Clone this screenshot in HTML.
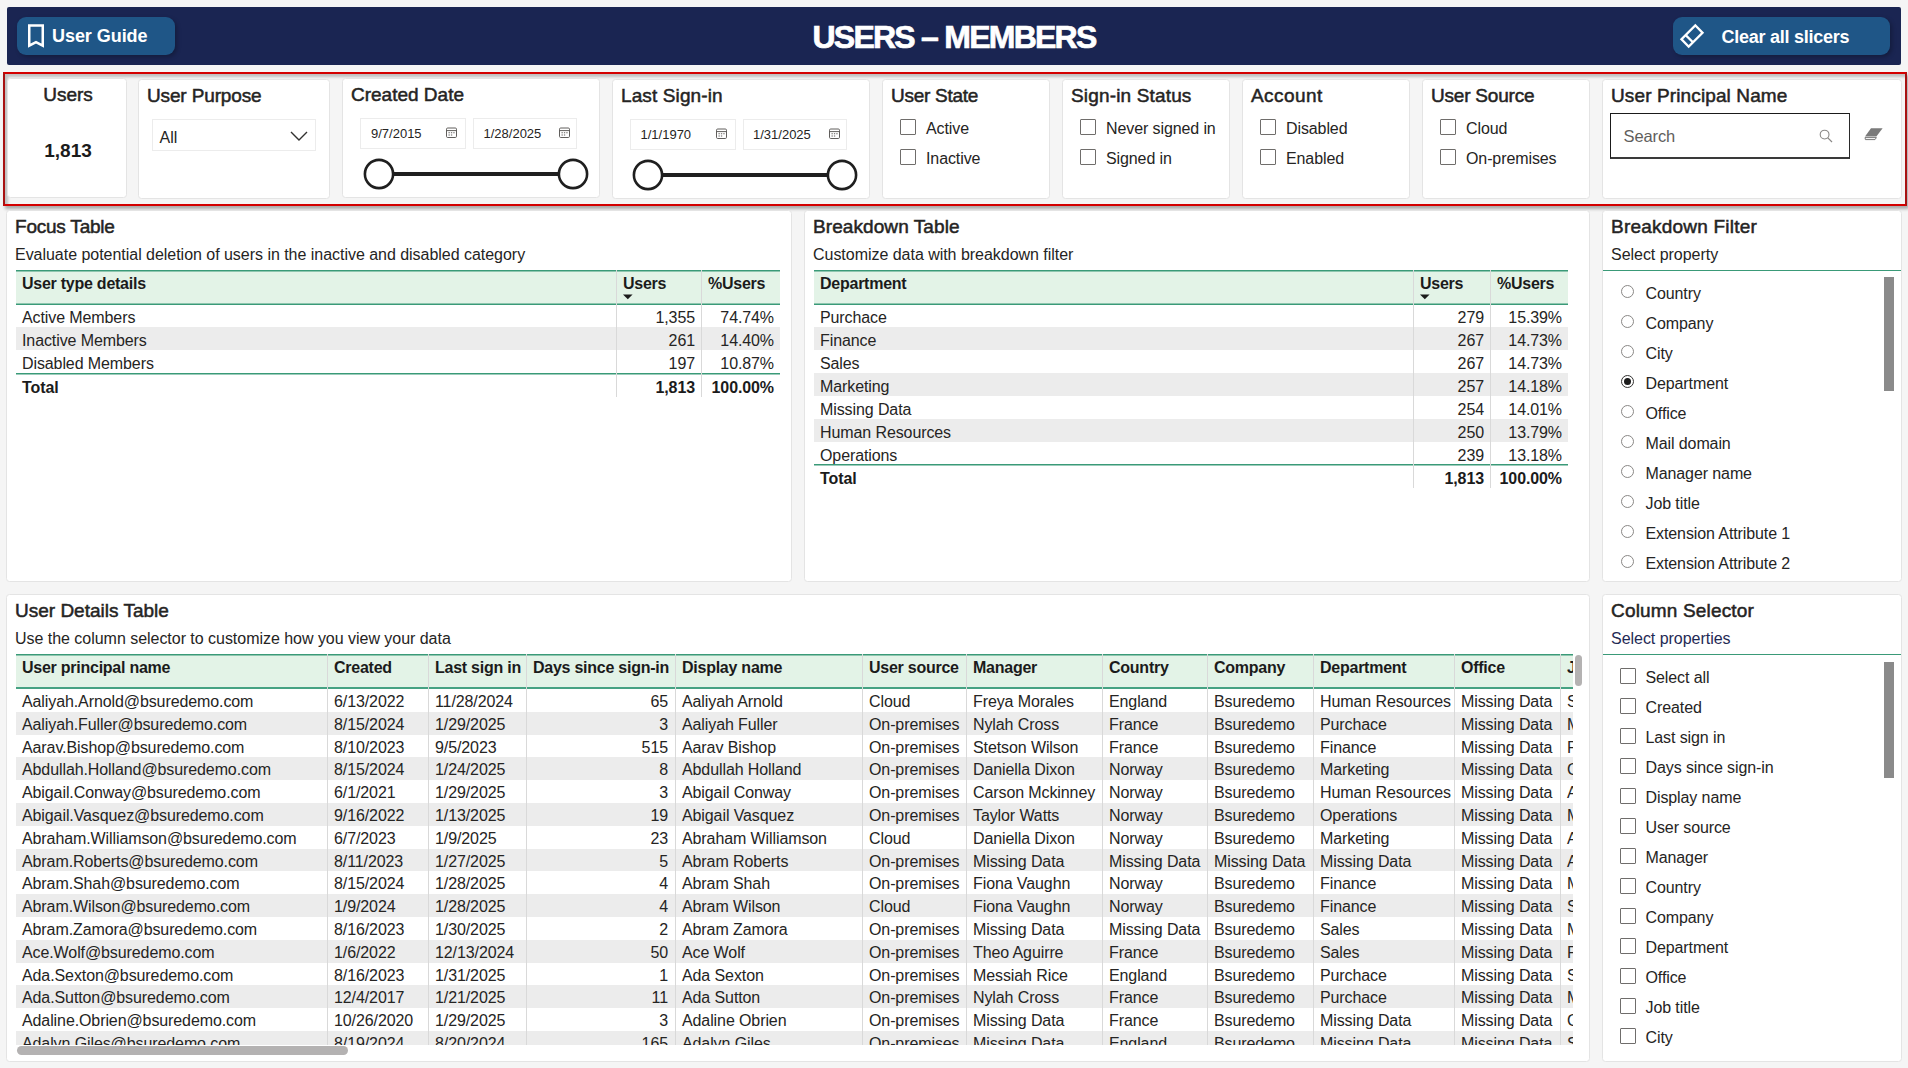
<!DOCTYPE html>
<html lang="en"><head><meta charset="utf-8"><title>Users - Members</title>
<style>
*{box-sizing:border-box;margin:0;padding:0}
html,body{width:1908px;height:1068px;overflow:hidden;background:#f5f5f5}
body{font-family:"Liberation Sans",sans-serif;color:#252423;position:relative}
.abs{position:absolute}
.card{position:absolute;background:#fff;border:1px solid #e4e4e4;border-radius:3.5px}
.hdr{position:absolute;left:7px;top:7px;width:1894px;height:58px;background:#1a2552;border-radius:2px}
.btn{position:absolute;top:10px;height:38px;background:#1f5687;border-radius:9px;color:#fff;font-weight:bold;box-shadow:2px 2px 4px rgba(0,0,0,.25)}
.title{position:absolute;left:0;top:0;width:100%;height:58px;line-height:60px;text-align:center;color:#fff;font-weight:bold;font-size:32px;letter-spacing:-1.75px;-webkit-text-stroke:0.7px #fff}
.redbox{position:absolute;left:3px;top:72px;width:1904px;height:134px;border:2px solid #d40000;border-left-color:#a81212;border-right-color:#a81212;box-shadow:2px 3px 3px rgba(0,0,0,.30), inset 3px 3px 3px rgba(0,0,0,.22)}
.st{position:absolute;font-size:19px;line-height:22px;color:#252423;white-space:nowrap;letter-spacing:0;-webkit-text-stroke:0.5px #252423}
.cb{position:absolute;width:16px;height:16px;border:1px solid #6f6d6b;background:#fff;border-radius:1px}
.cl{position:absolute;font-size:16px;letter-spacing:-0.1px;line-height:18px;white-space:nowrap;color:#252423}
.dinp{position:absolute;height:31px;border:1px solid #ececec;background:#fff;font-size:13px;line-height:29px;padding-left:10px;color:#252423}

.ct{position:absolute;font-size:19px;line-height:22px;white-space:nowrap;letter-spacing:0;-webkit-text-stroke:0.5px #252423}
.cs{position:absolute;font-size:16px;letter-spacing:-0.03px;line-height:18px;white-space:nowrap;color:#252423}
.tb{position:absolute;font-size:16px;letter-spacing:-0.1px;color:#252423}
.th{position:absolute;left:0;top:0;width:100%;z-index:2;background:#e3f3e7;border-top:1px solid #3a9a78;border-bottom:1px solid #3a9a78;box-shadow:inset 0 1px 0 rgba(58,154,120,.5),inset 0 -1px 0 rgba(58,154,120,.5);font-weight:bold;color:#1b1b1b}
.th span{position:absolute;top:4px;line-height:18px;white-space:nowrap;font-size:16px;letter-spacing:-0.25px}
.tr{position:absolute;left:0;width:100%;white-space:nowrap;overflow:hidden}
.tr.g{background:#ececec}
.tr span{position:absolute;top:0;height:100%;white-space:nowrap}
.vl{position:absolute;width:1px;background:#d9d9d9;z-index:3}
.num{text-align:right}
.tot{font-weight:bold;color:#1b1b1b;border-top:1px solid #3a9a78;box-shadow:inset 0 1px 0 rgba(58,154,120,.5)}
.rad{position:absolute;width:13px;height:13px;border:1px solid #8a8886;border-radius:50%;background:#fff}
.rl{position:absolute;font-size:16px;letter-spacing:-0.1px;line-height:18px;white-space:nowrap;color:#252423}
.sb{position:absolute;background:#8a8a8a}
.gl{position:absolute;height:1px;background:#3a9a78}

.dt{position:absolute;overflow:hidden;font-size:16px;letter-spacing:-0.1px;color:#252423}
.dh{position:absolute;left:0;top:0;width:100%;background:#e3f3e7;border-top:1px solid #3a9a78;border-bottom:2px solid #46a283;box-shadow:inset 0 1px 0 rgba(58,154,120,.5);font-weight:bold;color:#1b1b1b}
.dh span{position:absolute;top:4px;line-height:18px;white-space:nowrap;letter-spacing:-0.25px}
.dr{position:absolute;left:0;width:100%;white-space:nowrap}
.dr.g{background:#ececec}
.dr span{position:absolute;top:0;white-space:nowrap}
.hsb{position:absolute;background:#b4b2b2;border-radius:4px}
</style></head>
<body>
<div class="hdr">
<div class="title">USERS – MEMBERS</div>
<div class="btn" style="left:10px;width:158px">
<svg class="abs" style="left:9px;top:6px" width="20" height="27" viewBox="0 0 20 27"><path d="M3.25 2.4H16.75V22.6L10 19.2L3.25 22.6Z" fill="none" stroke="#fff" stroke-width="2.5"/></svg>
<span class="abs" style="left:35px;top:9px;font-size:18px;line-height:21px;white-space:nowrap;letter-spacing:-0.05px">User Guide</span>
</div>
<div class="btn" style="left:1666px;width:217px">
<svg class="abs" style="left:6px;top:6px" width="26" height="26" viewBox="0 0 26 26"><g transform="rotate(-45 13 13)" fill="none" stroke="#fff" stroke-width="2.3"><rect x="3.2" y="7.9" width="19.6" height="10.2"/><path d="M9.2 7.9V18.1"/></g></svg>
<span class="abs" style="left:48.5px;top:10px;font-size:18px;line-height:21px;white-space:nowrap;letter-spacing:-0.26px">Clear all slicers</span>
</div>
</div>
<div class="redbox"></div>
<div class="card" style="left:7px;top:78px;width:120px;height:120px"><div class="abs" style="left:0;top:5px;width:100%;text-align:center;font-size:19px;line-height:22px;-webkit-text-stroke:0.5px #252423;padding-left:2px">Users</div><div class="abs" style="left:0;top:61px;width:100%;text-align:center;font-size:19px;line-height:22px;font-weight:bold;color:#1b1b1b;padding-left:2px">1,813</div></div>
<div class="card" style="left:138px;top:79px;width:192px;height:119.5px"><div class="st" style="left:8px;top:5px;letter-spacing:-0.14px">User Purpose</div><div class="abs" style="left:12.5px;top:39px;width:164px;height:32px;border:1px solid #ececec;font-size:16px;line-height:36px;padding-left:7px">All<svg class="abs" style="right:7px;top:10px" width="18" height="12" viewBox="0 0 18 12"><path d="M1 2L9 10L17 2" fill="none" stroke="#323130" stroke-width="1.4"/></svg></div></div>
<div class="card" style="left:342px;top:78px;width:258px;height:120px"><div class="st" style="left:8px;top:5px">Created Date</div><div class="dinp" style="left:17px;top:39px;width:106px">9/7/2015<svg class="abs" style="right:8px;top:8px" width="11" height="11" viewBox="0 0 11 11"><rect x="0.5" y="1" width="10" height="9.5" rx="1.2" fill="none" stroke="#605e5c" stroke-width="1"/><path d="M0.5 3.6H10.5" stroke="#605e5c" stroke-width="1"/><path d="M2.5 5.8h1.3M4.9 5.8h1.3M7.3 5.8h1.3M2.5 8h1.3M4.9 8h1.3" stroke="#605e5c" stroke-width="1.1"/></svg></div><div class="dinp" style="left:129.5px;top:39px;width:104px">1/28/2025<svg class="abs" style="right:6px;top:8px" width="11" height="11" viewBox="0 0 11 11"><rect x="0.5" y="1" width="10" height="9.5" rx="1.2" fill="none" stroke="#605e5c" stroke-width="1"/><path d="M0.5 3.6H10.5" stroke="#605e5c" stroke-width="1"/><path d="M2.5 5.8h1.3M4.9 5.8h1.3M7.3 5.8h1.3M2.5 8h1.3M4.9 8h1.3" stroke="#605e5c" stroke-width="1.1"/></svg></div><svg class="abs" style="left:16px;top:74.5px" width="234" height="40" viewBox="0 0 234 40"><path d="M20 20H214" stroke="#1f1f1f" stroke-width="4"/><circle cx="20" cy="20" r="14.1" fill="#fff" stroke="#1f1f1f" stroke-width="2.6"/><circle cx="214" cy="20" r="14.1" fill="#fff" stroke="#1f1f1f" stroke-width="2.6"/></svg></div>
<div class="card" style="left:612px;top:79px;width:258px;height:119.5px"><div class="st" style="left:8px;top:5px;letter-spacing:0.12px">Last Sign-in</div><div class="dinp" style="left:17px;top:39px;width:106px;padding-left:9.5px">1/1/1970<svg class="abs" style="right:8px;top:8px" width="11" height="11" viewBox="0 0 11 11"><rect x="0.5" y="1" width="10" height="9.5" rx="1.2" fill="none" stroke="#605e5c" stroke-width="1"/><path d="M0.5 3.6H10.5" stroke="#605e5c" stroke-width="1"/><path d="M2.5 5.8h1.3M4.9 5.8h1.3M7.3 5.8h1.3M2.5 8h1.3M4.9 8h1.3" stroke="#605e5c" stroke-width="1.1"/></svg></div><div class="dinp" style="left:129.5px;top:39px;width:104px;padding-left:9.5px">1/31/2025<svg class="abs" style="right:6px;top:8px" width="11" height="11" viewBox="0 0 11 11"><rect x="0.5" y="1" width="10" height="9.5" rx="1.2" fill="none" stroke="#605e5c" stroke-width="1"/><path d="M0.5 3.6H10.5" stroke="#605e5c" stroke-width="1"/><path d="M2.5 5.8h1.3M4.9 5.8h1.3M7.3 5.8h1.3M2.5 8h1.3M4.9 8h1.3" stroke="#605e5c" stroke-width="1.1"/></svg></div><svg class="abs" style="left:15.3px;top:74.8px" width="234" height="40" viewBox="0 0 234 40"><path d="M20 20H214" stroke="#1f1f1f" stroke-width="4"/><circle cx="20" cy="20" r="14.1" fill="#fff" stroke="#1f1f1f" stroke-width="2.6"/><circle cx="214" cy="20" r="14.1" fill="#fff" stroke="#1f1f1f" stroke-width="2.6"/></svg></div>
<div class="card" style="left:882px;top:79px;width:168px;height:119.5px"><div class="st" style="left:8px;top:5px;letter-spacing:-0.26px">User State</div><div class="cb" style="left:17px;top:38.6px"></div><div class="cl" style="left:43px;top:40px">Active</div><div class="cb" style="left:17px;top:68.6px"></div><div class="cl" style="left:43px;top:70px">Inactive</div></div>
<div class="card" style="left:1062px;top:79px;width:168px;height:119.5px"><div class="st" style="left:8px;top:5px;letter-spacing:0.16px">Sign-in Status</div><div class="cb" style="left:17px;top:38.6px"></div><div class="cl" style="left:43px;top:40px">Never signed in</div><div class="cb" style="left:17px;top:68.6px"></div><div class="cl" style="left:43px;top:70px">Signed in</div></div>
<div class="card" style="left:1242px;top:79px;width:168px;height:119.5px"><div class="st" style="left:8px;top:5px;letter-spacing:0.44px">Account</div><div class="cb" style="left:17px;top:38.6px"></div><div class="cl" style="left:43px;top:40px">Disabled</div><div class="cb" style="left:17px;top:68.6px"></div><div class="cl" style="left:43px;top:70px">Enabled</div></div>
<div class="card" style="left:1422px;top:79px;width:168px;height:119.5px"><div class="st" style="left:8px;top:5px;letter-spacing:-0.21px">User Source</div><div class="cb" style="left:17px;top:38.6px"></div><div class="cl" style="left:43px;top:40px">Cloud</div><div class="cb" style="left:17px;top:68.6px"></div><div class="cl" style="left:43px;top:70px">On-premises</div></div>
<div class="card" style="left:1602px;top:79px;width:300px;height:119.5px"><div class="st" style="left:8px;top:5px;letter-spacing:0.12px">User Principal Name</div><div class="abs" style="left:7px;top:33px;width:240px;height:45.5px;border:1px solid #1a1a1a;border-bottom:2px solid #3a3a3a;border-right:1.5px solid #2a2a2a;font-size:16.5px;line-height:44px;padding-left:12.5px;color:#605e5c;letter-spacing:-0.1px">Search<svg class="abs" style="right:16px;top:15px" width="14" height="14" viewBox="0 0 14 14"><circle cx="5.6" cy="5.6" r="4.4" fill="none" stroke="#8a8886" stroke-width="1.1"/><path d="M8.6 8.6L13 13" stroke="#8a8886" stroke-width="1.2"/></svg></div><svg class="abs" style="left:261px;top:47px" width="20" height="14" viewBox="0 0 20 14"><path d="M7 1.2H18.6L12.4 9.4H1Z" fill="#7a7a7a"/><path d="M1 10.6H12.4L11 12.6H1.4Z" fill="none" stroke="#7a7a7a" stroke-width="1"/></svg></div>
<div class="card" style="left:6px;top:210px;width:786px;height:372px"><div class="ct" style="left:8px;top:5px;letter-spacing:-0.22px">Focus Table</div><div class="cs" style="left:8px;top:35px">Evaluate potential deletion of users in the inactive and disabled category</div><div class="tb" style="left:9px;top:59px;width:764px;height:127px"><div class="th" style="height:35px"><span style="left:6px">User type details</span><span style="left:607px">Users</span><span style="left:692px">%Users</span><svg class="abs" style="left:607px;top:23px" width="10" height="6" viewBox="0 0 10 6"><path d="M0 0.5H9.6L4.8 5.2Z" fill="#1b1b1b"/></svg></div><div class="tr" style="top:34.3px;height:22.9px;line-height:27.4px"><span style="left:6px">Active Members</span><span class="num" style="left:600px;width:79px">1,355</span><span class="num" style="left:685px;width:73px">74.74%</span></div><div class="tr g" style="top:57.2px;height:22.9px;line-height:27.4px"><span style="left:6px">Inactive Members</span><span class="num" style="left:600px;width:79px">261</span><span class="num" style="left:685px;width:73px">14.40%</span></div><div class="tr" style="top:80.1px;height:22.9px;line-height:27.4px"><span style="left:6px">Disabled Members</span><span class="num" style="left:600px;width:79px">197</span><span class="num" style="left:685px;width:73px">10.87%</span></div><div class="tr tot" style="top:102.7px;height:24px;line-height:27px"><span style="left:6px">Total</span><span class="num" style="left:600px;width:79px">1,813</span><span class="num" style="left:685px;width:73px">100.00%</span></div><div class="vl" style="left:600px;top:0;height:126.5px"></div><div class="vl" style="left:685px;top:0;height:126.5px"></div></div></div>
<div class="card" style="left:804px;top:210px;width:786px;height:372px"><div class="ct" style="left:8px;top:5px;letter-spacing:0.08px">Breakdown Table</div><div class="cs" style="left:8px;top:35px">Customize data with breakdown filter</div><div class="tb" style="left:9px;top:59px;width:754px;height:218.6px"><div class="th" style="height:35px"><span style="left:6px">Department</span><span style="left:606px">Users</span><span style="left:683px">%Users</span><svg class="abs" style="left:606px;top:23px" width="10" height="6" viewBox="0 0 10 6"><path d="M0 0.5H9.6L4.8 5.2Z" fill="#1b1b1b"/></svg></div><div class="tr" style="top:34.3px;height:22.9px;line-height:27.4px"><span style="left:6px">Purchace</span><span class="num" style="left:599px;width:71px">279</span><span class="num" style="left:676px;width:72px">15.39%</span></div><div class="tr g" style="top:57.2px;height:22.9px;line-height:27.4px"><span style="left:6px">Finance</span><span class="num" style="left:599px;width:71px">267</span><span class="num" style="left:676px;width:72px">14.73%</span></div><div class="tr" style="top:80.1px;height:22.9px;line-height:27.4px"><span style="left:6px">Sales</span><span class="num" style="left:599px;width:71px">267</span><span class="num" style="left:676px;width:72px">14.73%</span></div><div class="tr g" style="top:103px;height:22.9px;line-height:27.4px"><span style="left:6px">Marketing</span><span class="num" style="left:599px;width:71px">257</span><span class="num" style="left:676px;width:72px">14.18%</span></div><div class="tr" style="top:125.9px;height:22.9px;line-height:27.4px"><span style="left:6px">Missing Data</span><span class="num" style="left:599px;width:71px">254</span><span class="num" style="left:676px;width:72px">14.01%</span></div><div class="tr g" style="top:148.8px;height:22.9px;line-height:27.4px"><span style="left:6px">Human Resources</span><span class="num" style="left:599px;width:71px">250</span><span class="num" style="left:676px;width:72px">13.79%</span></div><div class="tr" style="top:171.7px;height:22.9px;line-height:27.4px"><span style="left:6px">Operations</span><span class="num" style="left:599px;width:71px">239</span><span class="num" style="left:676px;width:72px">13.18%</span></div><div class="tr tot" style="top:194.3px;height:24px;line-height:27px"><span style="left:6px">Total</span><span class="num" style="left:599px;width:71px">1,813</span><span class="num" style="left:676px;width:72px">100.00%</span></div><div class="vl" style="left:599px;top:0;height:218.1px"></div><div class="vl" style="left:676px;top:0;height:218.1px"></div></div></div>
<div class="card" style="left:1602px;top:210px;width:300px;height:372px"><div class="ct" style="left:8px;top:5px;letter-spacing:0.22px">Breakdown Filter</div><div class="cs" style="left:8px;top:35px">Select property</div><div class="gl" style="left:0;top:59px;width:298px"></div><div class="rad" style="left:18.2px;top:74px"></div><div class="rl" style="left:42.5px;top:74px">Country</div><div class="rad" style="left:18.2px;top:104px"></div><div class="rl" style="left:42.5px;top:104px">Company</div><div class="rad" style="left:18.2px;top:134px"></div><div class="rl" style="left:42.5px;top:134px">City</div><div class="rad" style="left:18.2px;top:164px;border-color:#323130"><div class="abs" style="left:2px;top:2px;width:7px;height:7px;border-radius:50%;background:#1b1b1b"></div></div><div class="rl" style="left:42.5px;top:164px">Department</div><div class="rad" style="left:18.2px;top:194px"></div><div class="rl" style="left:42.5px;top:194px">Office</div><div class="rad" style="left:18.2px;top:224px"></div><div class="rl" style="left:42.5px;top:224px">Mail domain</div><div class="rad" style="left:18.2px;top:254px"></div><div class="rl" style="left:42.5px;top:254px">Manager name</div><div class="rad" style="left:18.2px;top:284px"></div><div class="rl" style="left:42.5px;top:284px">Job title</div><div class="rad" style="left:18.2px;top:314px"></div><div class="rl" style="left:42.5px;top:314px">Extension Attribute 1</div><div class="rad" style="left:18.2px;top:344px"></div><div class="rl" style="left:42.5px;top:344px">Extension Attribute 2</div><div class="sb" style="left:281px;top:66px;width:9.5px;height:114px"></div></div>
<div class="card" style="left:6px;top:594px;width:1584px;height:468px"><div class="ct" style="left:8px;top:5px">User Details Table</div><div class="cs" style="left:8px;top:35px">Use the column selector to customize how you view your data</div><div class="dt" style="left:9px;top:59px;width:1557px;height:391px"><div class="dh" style="height:35px"><span style="left:6px">User principal name</span><span style="left:318px">Created</span><span style="left:419px">Last sign in</span><span style="left:517px">Days since sign-in</span><span style="left:666px">Display name</span><span style="left:853px">User source</span><span style="left:957px">Manager</span><span style="left:1093px">Country</span><span style="left:1198px">Company</span><span style="left:1304px">Department</span><span style="left:1445px">Office</span><span style="left:1551px">Job title</span></div><div class="dr" style="top:35px;height:22.8px;line-height:25.8px"><span style="left:6px">Aaliyah.Arnold@bsuredemo.com</span><span style="left:318px">6/13/2022</span><span style="left:419px">11/28/2024</span><span class="num" style="left:510px;width:142px">65</span><span style="left:666px">Aaliyah Arnold</span><span style="left:853px">Cloud</span><span style="left:957px">Freya Morales</span><span style="left:1093px">England</span><span style="left:1198px">Bsuredemo</span><span style="left:1304px">Human Resources</span><span style="left:1445px">Missing Data</span><span style="left:1551px">Sales Manager</span></div><div class="dr g" style="top:57.8px;height:22.8px;line-height:25.8px"><span style="left:6px">Aaliyah.Fuller@bsuredemo.com</span><span style="left:318px">8/15/2024</span><span style="left:419px">1/29/2025</span><span class="num" style="left:510px;width:142px">3</span><span style="left:666px">Aaliyah Fuller</span><span style="left:853px">On-premises</span><span style="left:957px">Nylah Cross</span><span style="left:1093px">France</span><span style="left:1198px">Bsuredemo</span><span style="left:1304px">Purchace</span><span style="left:1445px">Missing Data</span><span style="left:1551px">Manager</span></div><div class="dr" style="top:80.6px;height:22.8px;line-height:25.8px"><span style="left:6px">Aarav.Bishop@bsuredemo.com</span><span style="left:318px">8/10/2023</span><span style="left:419px">9/5/2023</span><span class="num" style="left:510px;width:142px">515</span><span style="left:666px">Aarav Bishop</span><span style="left:853px">On-premises</span><span style="left:957px">Stetson Wilson</span><span style="left:1093px">France</span><span style="left:1198px">Bsuredemo</span><span style="left:1304px">Finance</span><span style="left:1445px">Missing Data</span><span style="left:1551px">Purchaser</span></div><div class="dr g" style="top:103.4px;height:22.8px;line-height:25.8px"><span style="left:6px">Abdullah.Holland@bsuredemo.com</span><span style="left:318px">8/15/2024</span><span style="left:419px">1/24/2025</span><span class="num" style="left:510px;width:142px">8</span><span style="left:666px">Abdullah Holland</span><span style="left:853px">On-premises</span><span style="left:957px">Daniella Dixon</span><span style="left:1093px">Norway</span><span style="left:1198px">Bsuredemo</span><span style="left:1304px">Marketing</span><span style="left:1445px">Missing Data</span><span style="left:1551px">Controller</span></div><div class="dr" style="top:126.2px;height:22.8px;line-height:25.8px"><span style="left:6px">Abigail.Conway@bsuredemo.com</span><span style="left:318px">6/1/2021</span><span style="left:419px">1/29/2025</span><span class="num" style="left:510px;width:142px">3</span><span style="left:666px">Abigail Conway</span><span style="left:853px">On-premises</span><span style="left:957px">Carson Mckinney</span><span style="left:1093px">Norway</span><span style="left:1198px">Bsuredemo</span><span style="left:1304px">Human Resources</span><span style="left:1445px">Missing Data</span><span style="left:1551px">Analyst</span></div><div class="dr g" style="top:149px;height:22.8px;line-height:25.8px"><span style="left:6px">Abigail.Vasquez@bsuredemo.com</span><span style="left:318px">9/16/2022</span><span style="left:419px">1/13/2025</span><span class="num" style="left:510px;width:142px">19</span><span style="left:666px">Abigail Vasquez</span><span style="left:853px">On-premises</span><span style="left:957px">Taylor Watts</span><span style="left:1093px">Norway</span><span style="left:1198px">Bsuredemo</span><span style="left:1304px">Operations</span><span style="left:1445px">Missing Data</span><span style="left:1551px">Manager</span></div><div class="dr" style="top:171.8px;height:22.8px;line-height:25.8px"><span style="left:6px">Abraham.Williamson@bsuredemo.com</span><span style="left:318px">6/7/2023</span><span style="left:419px">1/9/2025</span><span class="num" style="left:510px;width:142px">23</span><span style="left:666px">Abraham Williamson</span><span style="left:853px">Cloud</span><span style="left:957px">Daniella Dixon</span><span style="left:1093px">Norway</span><span style="left:1198px">Bsuredemo</span><span style="left:1304px">Marketing</span><span style="left:1445px">Missing Data</span><span style="left:1551px">Analyst</span></div><div class="dr g" style="top:194.6px;height:22.8px;line-height:25.8px"><span style="left:6px">Abram.Roberts@bsuredemo.com</span><span style="left:318px">8/11/2023</span><span style="left:419px">1/27/2025</span><span class="num" style="left:510px;width:142px">5</span><span style="left:666px">Abram Roberts</span><span style="left:853px">On-premises</span><span style="left:957px">Missing Data</span><span style="left:1093px">Missing Data</span><span style="left:1198px">Missing Data</span><span style="left:1304px">Missing Data</span><span style="left:1445px">Missing Data</span><span style="left:1551px">Analyst</span></div><div class="dr" style="top:217.4px;height:22.8px;line-height:25.8px"><span style="left:6px">Abram.Shah@bsuredemo.com</span><span style="left:318px">8/15/2024</span><span style="left:419px">1/28/2025</span><span class="num" style="left:510px;width:142px">4</span><span style="left:666px">Abram Shah</span><span style="left:853px">On-premises</span><span style="left:957px">Fiona Vaughn</span><span style="left:1093px">Norway</span><span style="left:1198px">Bsuredemo</span><span style="left:1304px">Finance</span><span style="left:1445px">Missing Data</span><span style="left:1551px">Manager</span></div><div class="dr g" style="top:240.2px;height:22.8px;line-height:25.8px"><span style="left:6px">Abram.Wilson@bsuredemo.com</span><span style="left:318px">1/9/2024</span><span style="left:419px">1/28/2025</span><span class="num" style="left:510px;width:142px">4</span><span style="left:666px">Abram Wilson</span><span style="left:853px">Cloud</span><span style="left:957px">Fiona Vaughn</span><span style="left:1093px">Norway</span><span style="left:1198px">Bsuredemo</span><span style="left:1304px">Finance</span><span style="left:1445px">Missing Data</span><span style="left:1551px">Sales Manager</span></div><div class="dr" style="top:263px;height:22.8px;line-height:25.8px"><span style="left:6px">Abram.Zamora@bsuredemo.com</span><span style="left:318px">8/16/2023</span><span style="left:419px">1/30/2025</span><span class="num" style="left:510px;width:142px">2</span><span style="left:666px">Abram Zamora</span><span style="left:853px">On-premises</span><span style="left:957px">Missing Data</span><span style="left:1093px">Missing Data</span><span style="left:1198px">Bsuredemo</span><span style="left:1304px">Sales</span><span style="left:1445px">Missing Data</span><span style="left:1551px">Manager</span></div><div class="dr g" style="top:285.8px;height:22.8px;line-height:25.8px"><span style="left:6px">Ace.Wolf@bsuredemo.com</span><span style="left:318px">1/6/2022</span><span style="left:419px">12/13/2024</span><span class="num" style="left:510px;width:142px">50</span><span style="left:666px">Ace Wolf</span><span style="left:853px">On-premises</span><span style="left:957px">Theo Aguirre</span><span style="left:1093px">France</span><span style="left:1198px">Bsuredemo</span><span style="left:1304px">Sales</span><span style="left:1445px">Missing Data</span><span style="left:1551px">Purchaser</span></div><div class="dr" style="top:308.6px;height:22.8px;line-height:25.8px"><span style="left:6px">Ada.Sexton@bsuredemo.com</span><span style="left:318px">8/16/2023</span><span style="left:419px">1/31/2025</span><span class="num" style="left:510px;width:142px">1</span><span style="left:666px">Ada Sexton</span><span style="left:853px">On-premises</span><span style="left:957px">Messiah Rice</span><span style="left:1093px">England</span><span style="left:1198px">Bsuredemo</span><span style="left:1304px">Purchace</span><span style="left:1445px">Missing Data</span><span style="left:1551px">Sales Manager</span></div><div class="dr g" style="top:331.4px;height:22.8px;line-height:25.8px"><span style="left:6px">Ada.Sutton@bsuredemo.com</span><span style="left:318px">12/4/2017</span><span style="left:419px">1/21/2025</span><span class="num" style="left:510px;width:142px">11</span><span style="left:666px">Ada Sutton</span><span style="left:853px">On-premises</span><span style="left:957px">Nylah Cross</span><span style="left:1093px">France</span><span style="left:1198px">Bsuredemo</span><span style="left:1304px">Purchace</span><span style="left:1445px">Missing Data</span><span style="left:1551px">Manager</span></div><div class="dr" style="top:354.2px;height:22.8px;line-height:25.8px"><span style="left:6px">Adaline.Obrien@bsuredemo.com</span><span style="left:318px">10/26/2020</span><span style="left:419px">1/29/2025</span><span class="num" style="left:510px;width:142px">3</span><span style="left:666px">Adaline Obrien</span><span style="left:853px">On-premises</span><span style="left:957px">Missing Data</span><span style="left:1093px">France</span><span style="left:1198px">Bsuredemo</span><span style="left:1304px">Missing Data</span><span style="left:1445px">Missing Data</span><span style="left:1551px">Controller</span></div><div class="dr g" style="top:377px;height:22.8px;line-height:25.8px"><span style="left:6px">Adalyn.Giles@bsuredemo.com</span><span style="left:318px">8/19/2024</span><span style="left:419px">8/20/2024</span><span class="num" style="left:510px;width:142px">165</span><span style="left:666px">Adalyn Giles</span><span style="left:853px">On-premises</span><span style="left:957px">Missing Data</span><span style="left:1093px">England</span><span style="left:1198px">Bsuredemo</span><span style="left:1304px">Missing Data</span><span style="left:1445px">Missing Data</span><span style="left:1551px">Sales Manager</span></div><div class="vl" style="left:311px;top:0;height:391px"></div><div class="vl" style="left:412px;top:0;height:391px"></div><div class="vl" style="left:510px;top:0;height:391px"></div><div class="vl" style="left:659px;top:0;height:391px"></div><div class="vl" style="left:846px;top:0;height:391px"></div><div class="vl" style="left:950px;top:0;height:391px"></div><div class="vl" style="left:1086px;top:0;height:391px"></div><div class="vl" style="left:1191px;top:0;height:391px"></div><div class="vl" style="left:1297px;top:0;height:391px"></div><div class="vl" style="left:1438px;top:0;height:391px"></div><div class="vl" style="left:1544px;top:0;height:391px"></div></div><div class="hsb" style="left:9.5px;top:451px;width:331.5px;height:9px;border-radius:4.5px"></div><div class="hsb" style="left:1567.5px;top:60.3px;width:7px;height:31px"></div></div>
<div class="card" style="left:1602px;top:594px;width:300px;height:468px;overflow:hidden"><div class="ct" style="left:8px;top:5px;letter-spacing:0.17px">Column Selector</div><div class="cs" style="left:8px;top:35px;color:#1f2a55">Select properties</div><div class="gl" style="left:0;top:59px;width:298px"></div><div class="cb" style="left:17px;top:73px"></div><div class="cl" style="left:42.5px;top:73.5px">Select all</div><div class="cb" style="left:17px;top:103px"></div><div class="cl" style="left:42.5px;top:103.5px">Created</div><div class="cb" style="left:17px;top:133px"></div><div class="cl" style="left:42.5px;top:133.5px">Last sign in</div><div class="cb" style="left:17px;top:163px"></div><div class="cl" style="left:42.5px;top:163.5px">Days since sign-in</div><div class="cb" style="left:17px;top:193px"></div><div class="cl" style="left:42.5px;top:193.5px">Display name</div><div class="cb" style="left:17px;top:223px"></div><div class="cl" style="left:42.5px;top:223.5px">User source</div><div class="cb" style="left:17px;top:253px"></div><div class="cl" style="left:42.5px;top:253.5px">Manager</div><div class="cb" style="left:17px;top:283px"></div><div class="cl" style="left:42.5px;top:283.5px">Country</div><div class="cb" style="left:17px;top:313px"></div><div class="cl" style="left:42.5px;top:313.5px">Company</div><div class="cb" style="left:17px;top:343px"></div><div class="cl" style="left:42.5px;top:343.5px">Department</div><div class="cb" style="left:17px;top:373px"></div><div class="cl" style="left:42.5px;top:373.5px">Office</div><div class="cb" style="left:17px;top:403px"></div><div class="cl" style="left:42.5px;top:403.5px">Job title</div><div class="cb" style="left:17px;top:433px"></div><div class="cl" style="left:42.5px;top:433.5px">City</div><div class="sb" style="left:281px;top:66.5px;width:9.5px;height:116.5px"></div></div>
</body></html>
